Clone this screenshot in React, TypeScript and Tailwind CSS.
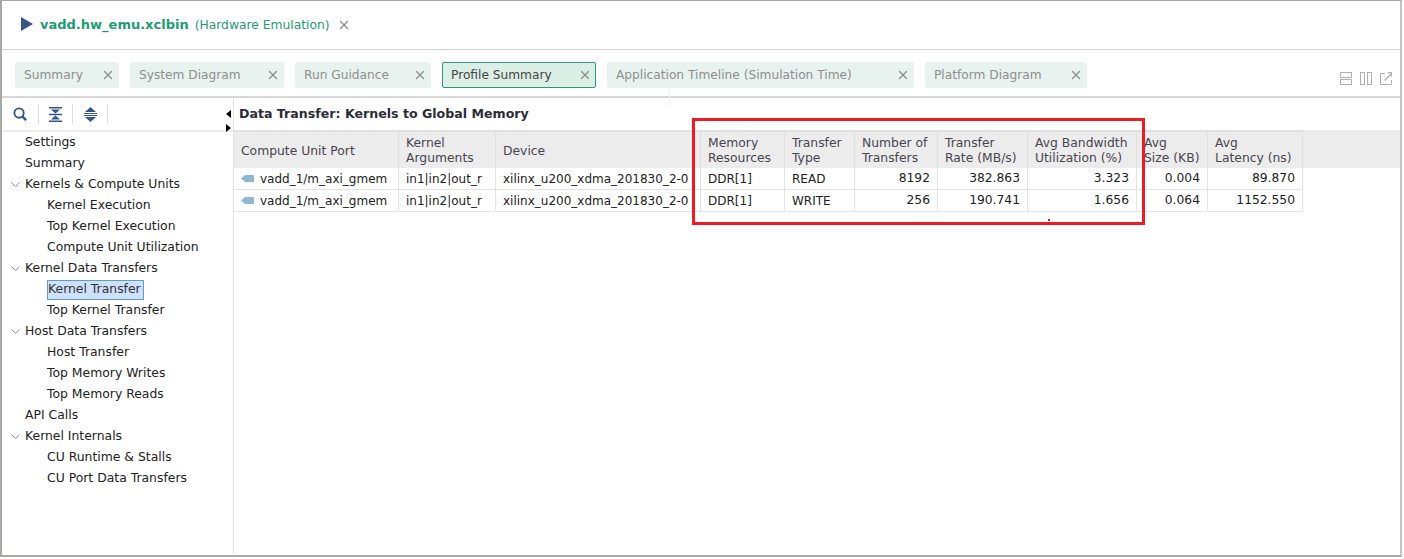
import { ChevronDown, X } from "lucide-react";

const tabs = [
  { label: "Summary", width: "w-[104px]" },
  { label: "System Diagram", width: "w-[154px]" },
  { label: "Run Guidance", width: "w-[136px]" },
  { label: "Profile Summary", width: "w-[154px]", active: true },
  { label: "Application Timeline (Simulation Time)", width: "w-[307px]" },
  { label: "Platform Diagram", width: "w-[162px]" },
];

const tree = [
  { label: "Settings", level: 0 },
  { label: "Summary", level: 0 },
  { label: "Kernels & Compute Units", level: 0, open: true },
  { label: "Kernel Execution", level: 1 },
  { label: "Top Kernel Execution", level: 1 },
  { label: "Compute Unit Utilization", level: 1 },
  { label: "Kernel Data Transfers", level: 0, open: true },
  { label: "Kernel Transfer", level: 1, selected: true },
  { label: "Top Kernel Transfer", level: 1 },
  { label: "Host Data Transfers", level: 0, open: true },
  { label: "Host Transfer", level: 1 },
  { label: "Top Memory Writes", level: 1 },
  { label: "Top Memory Reads", level: 1 },
  { label: "API Calls", level: 0 },
  { label: "Kernel Internals", level: 0, open: true },
  { label: "CU Runtime & Stalls", level: 1 },
  { label: "CU Port Data Transfers", level: 1 },
];

const columns = [
  { title: ["Compute Unit Port"], width: "w-[165px]" },
  { title: ["Kernel", "Arguments"], width: "w-[97px]" },
  { title: ["Device"], width: "w-[205px]" },
  { title: ["Memory", "Resources"], width: "w-[84px]" },
  { title: ["Transfer", "Type"], width: "w-[70px]" },
  { title: ["Number of", "Transfers"], width: "w-[83px]" },
  { title: ["Transfer", "Rate (MB/s)"], width: "w-[90px]" },
  { title: ["Avg Bandwidth", "Utilization (%)"], width: "w-[109px]" },
  { title: ["Avg", "Size (KB)"], width: "w-[71px]" },
  { title: ["Avg", "Latency (ns)"], width: "w-[95px]" },
];

const rows = [
  ["vadd_1/m_axi_gmem", "in1|in2|out_r", "xilinx_u200_xdma_201830_2-0", "DDR[1]", "READ", "8192", "382.863", "3.323", "0.004", "89.870"],
  ["vadd_1/m_axi_gmem", "in1|in2|out_r", "xilinx_u200_xdma_201830_2-0", "DDR[1]", "WRITE", "256", "190.741", "1.656", "0.064", "1152.550"],
];

function PortIcon() {
  return (
    <svg width="13" height="7" viewBox="0 0 13 7" className="mr-[6px] shrink-0">
      <path d="M0 3.5 L4 0 H13 V7 H4 Z" fill="#8fb8d0" />
    </svg>
  );
}

function ToolbarIcons() {
  return (
    <div className="flex h-[32px] items-center pl-[11px]">
      <svg width="14" height="14" viewBox="0 0 15 15" fill="none" stroke="#34558b" strokeWidth="2">
        <circle cx="6.5" cy="6.5" r="5" />
        <path d="M10 10 L14 14" strokeWidth="2.5" />
      </svg>
      <div className="ml-[11px] h-[20px] w-px bg-[#dddddd]" />
      <svg width="13" height="15" viewBox="0 0 13 15" fill="#34558b" className="ml-[10px]">
        <path d="M0 0 H13 V1.5 H0 Z M2 2.5 H11 L6.5 6.5 Z M0 6.8 H13 V8.2 H0 Z M6.5 8.5 L11 12.5 H2 Z M0 13.5 H13 V15 H0 Z" />
      </svg>
      <div className="ml-[10px] h-[20px] w-px bg-[#dddddd]" />
      <svg width="13" height="15" viewBox="0 0 13 15" fill="#34558b" className="ml-[11px]">
        <path d="M6.5 0 L12 5 H1 Z M0 6 H13 V7 H0 Z M0 8 H13 V9 H0 Z M1 10 H12 L6.5 15 Z" />
      </svg>
      <div className="ml-[10px] h-[20px] w-px bg-[#dddddd]" />
    </div>
  );
}

export default function App() {
  return (
    <div className="relative h-[559px] w-[1404px] overflow-hidden bg-white font-['DejaVu_Sans',sans-serif] text-[12px] text-[#222222]">
      <div className="flex h-[557px] w-[1402px] flex-col border-2 border-t border-[#a8a8a4] border-r-[#c4c4c4]">
        {/* title */}
        <div className="flex h-[49px] shrink-0 items-center border-b border-[#d2d2d2] pl-[19px]">
          <svg width="12" height="14" viewBox="0 0 12 14" className="mb-[2px] mr-[7px]">
            <path d="M0 0 L12 7 L0 14 Z" fill="#34558b" />
          </svg>
          <span className="text-[13px] font-bold text-[#1d9c74]">vadd.hw_emu.xclbin</span>
          <span className="ml-[6px] text-[12.3px] text-[#1d9c74]">(Hardware Emulation)</span>
          <X size={14} strokeWidth={2.2} className="ml-[7px] text-[#8c8c8c]" />
        </div>

        {/* tabs */}
        <div className="flex h-[48px] shrink-0 items-start border-b-2 border-[#d8d8d8] pl-[13px] pt-[12px] text-[12.2px]">
          <div className="flex gap-[11px]">
            {tabs.map((tab) => (
              <div
                key={tab.label}
                className={`flex h-[26px] items-center justify-between rounded-[2px] ${tab.width} ${
                  tab.active
                    ? "border border-[#2b9b73] bg-[#dcefe6] pl-[8px] pr-[3px] text-[#444444]"
                    : "bg-[#e8f3ef] pl-[9px] pr-[4px] text-[#8e8e8e]"
                }`}
              >
                <span>{tab.label}</span>
                <X size={14} strokeWidth={2.2} className="text-[#8c8c8c]" />
              </div>
            ))}
          </div>
          <div className="ml-auto mt-[10px] flex items-center gap-[8px] pr-[8px]">
            <svg width="12" height="13" viewBox="0 0 12 13" fill="none" stroke="#b0b0b0">
              <rect x="0.5" y="0.5" width="11" height="5" />
              <rect x="0.5" y="7.5" width="11" height="5" />
            </svg>
            <svg width="12" height="13" viewBox="0 0 12 13" fill="none" stroke="#b0b0b0">
              <rect x="0.5" y="0.5" width="4" height="12" />
              <rect x="7.5" y="0.5" width="4" height="12" />
            </svg>
            <svg width="12" height="13" viewBox="0 0 12 13" fill="none" stroke="#b0b0b0">
              <path d="M5 1.5 H0.5 V12.5 H11.5 V8" />
              <path d="M4.5 8.5 L11 2" strokeWidth="1.5" />
              <path d="M7.5 0.5 H11.5 V4.5" strokeWidth="1.5" />
            </svg>
          </div>
        </div>

        <div className="flex min-h-0 flex-1">
          {/* left tree */}
          <div className="w-[232px] shrink-0 border-r border-[#e4e4e4]">
            <ToolbarIcons />
            <div className="h-[2px] bg-[#ececec]" />
            <div className="text-[12.4px]">
              {tree.map((item) => (
                <div key={item.label} className={`flex h-[21px] items-center ${item.level === 1 ? "pl-[45px]" : "pl-[23px]"}`}>
                  {item.open && <ChevronDown size={15} strokeWidth={1.5} className="-ml-[17px] mr-[2px] text-[#8c8c8c]" />}
                  <span className={item.selected ? "flex h-[20px] items-center border border-[#5a9bd8] bg-[#cfe0fb] pr-[2px] text-[#333333]" : ""}>{item.label}</span>
                </div>
              ))}
            </div>
          </div>

          {/* right content */}
          <div className="min-w-0 flex-1">
            <div className="flex h-[32px] items-center pl-[5px] pt-[1px] text-[12.6px] font-bold text-[#2c2c38]">
              Data Transfer: Kernels to Global Memory
            </div>
            <div className="h-[38px] bg-[#ececec]">
              <div className="flex h-full">
                {columns.map((col) => (
                  <div
                    key={col.title[0] + col.width}
                    className={`flex shrink-0 flex-col justify-center border-r border-t-2 border-[#e0e0e0] pl-[7px] text-[12.35px] leading-[15px] text-[#4a4450] ${col.width} ${
                      col.title.length === 1 ? "pt-[3px]" : "pt-[1px]"
                    }`}
                  >
                    {col.title.map((line) => (
                      <span key={line}>{line}</span>
                    ))}
                  </div>
                ))}
              </div>
            </div>
            {rows.map((row) => (
              <div key={row[4]} className="flex h-[22px]">
                {row.map((cell, i) => (
                  <div
                    key={i}
                    className={`flex shrink-0 items-center border-b border-r border-[#e4e4e4] ${columns[i].width} ${
                      i >= 5 ? "justify-end pr-[7px] text-[12.3px]" : "pl-[7px]"
                    } ${i === 1 || i === 2 ? "overflow-hidden whitespace-nowrap" : ""}`}
                  >
                    {i === 0 && <PortIcon />}
                    {cell}
                  </div>
                ))}
              </div>
            ))}
          </div>
        </div>
      </div>

      {/* sash arrows */}
      <div className="absolute left-[226px] top-[110px] h-0 w-0 border-y-[4px] border-r-[5px] border-y-transparent border-r-black" />
      <div className="absolute left-[226px] top-[124px] h-0 w-0 border-y-[4px] border-l-[5px] border-y-transparent border-l-black" />

      {/* faint leftover line under the tabs */}
      <div className="absolute left-[669px] top-[88px] h-[20px] w-px bg-[#f0f4f2]" />

      {/* red annotation */}
      <div className="absolute left-[692px] top-[118px] h-[107px] w-[453px] border-[3px] border-[#ed1c24]" />
      <div className="absolute left-[1048px] top-[219px] h-[2px] w-[2px] bg-[#ed1c24]" />
    </div>
  );
}
